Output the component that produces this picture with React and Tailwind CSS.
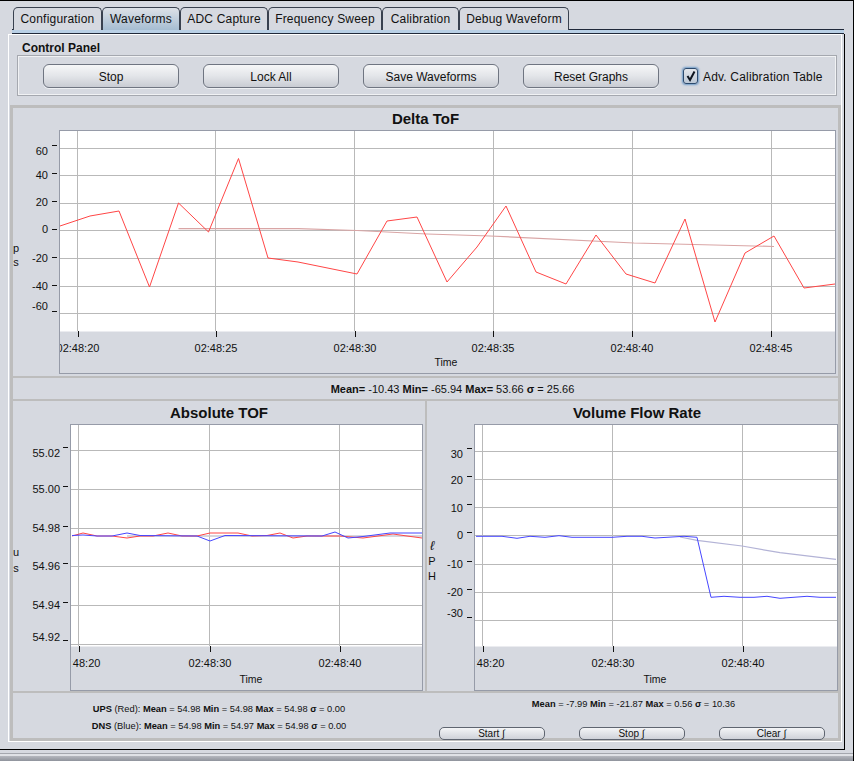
import React from 'react';

const TABS = ['Configuration', 'Waveforms', 'ADC Capture', 'Frequency Sweep', 'Calibration', 'Debug Waveform'];
const TAB_WIDTHS = { Configuration: 'w-[89px]', Waveforms: 'w-[78px]', 'ADC Capture': 'w-[88px]', 'Frequency Sweep': 'w-[114px]', Calibration: 'w-[77px]', 'Debug Waveform': 'w-[110px]' };

const DELTA = '60,226 90,216 119,211 149.5,287 178.5,203 208.5,232 238.5,158.5 268,258 298,262 357,274 387,221 417,217 447,282 477,247 506,206 536,272 566,284 596,235 626,274 655,283 685,219 715,322 745,253 774,236 804,288 835,284';
const DELTA_AVG = '178.5,228.7 298,228.7 357,230.5 427,234 490,236 634,243 774,246.5';
const UPS = '72,536 83,533 97,536 112,536 127,538 140,536 153,536 168,533 182,536 197,536 210,533 238,533 252,536 267,535.5 280,533 293,538 307,536 340,536 363,538 393,534 407,536 422,538';
const DNS = '72,535.5 83,535 97,536 112,536 127,533 140,535.5 197,536 210,541 225,535.5 322,536 335,532 348,538 363,536.5 390,533 422,533';
const TOF_AVG = '127,536 422,536';
const FLOW = '476,536.3 502,536.3 517,538.3 530,536.3 545,537.3 559,535.7 572,537.3 612,537.3 627,536.3 642,536.3 655,538 684,536.3 697,537.3 711,597.3 724,596.3 740,597.3 754,597.3 767,596.3 780,598.3 807,596.3 820,597.3 836,597.3';
const FLOW_AVG = '680,537 697,540.3 742,546 780,552.7 836,559.3';

function Plot({ box, frame, bottom, clipLeft, xs, ys, xTicks, xLabels, timeX, yTicks, yLabels, yRight, unit, id, children }) {
  const [vx, vy, vw, vh] = box;
  const [fx, fy, fr, fb] = frame;
  return (
    <svg width={vw} height={vh} viewBox={`${vx} ${vy} ${vw} ${vh}`} className="block shrink-0">
      <defs>
        <clipPath id={id}>
          <rect x={fx + clipLeft} y={fy} width={fr - fx} height={fb - fy} />
        </clipPath>
      </defs>
      <rect x={fx + 0.5} y={fy + 0.5} width={fr - fx} height={bottom - fy} fill="#fff" />
      <g stroke="#b9b9b9" shapeRendering="crispEdges">
        {xs.map((x) => <line key={x} x1={x + 0.5} x2={x + 0.5} y1={fy} y2={bottom} />)}
        {ys.map((y) => <line key={y} x1={fx} x2={fr} y1={y + 0.5} y2={y + 0.5} />)}
      </g>
      <g clipPath={`url(#${id})`}>
        {children}
        {xLabels.map((l, i) => (
          <text key={l} x={xTicks[i]} y={bottom + 21} fontSize="11" textAnchor="middle" fill="#111">{l}</text>
        ))}
      </g>
      <g stroke="#111" shapeRendering="crispEdges">
        {xTicks.map((x) => <line key={x} x1={x + 0.5} x2={x + 0.5} y1={bottom} y2={bottom + 6} />)}
        {yTicks.map((t) => <line key={t[0]} x1={fx - 7} x2={fx - 2} y1={t[0] + 0.5} y2={t[0] + 0.5} />)}
      </g>
      {yTicks.map((t, i) => (
        <text key={yLabels[i]} x={yRight} y={t[1]} fontSize="11" textAnchor="end" fill="#111">{yLabels[i]}</text>
      ))}
      {unit.map((u) => (
        <text key={u[0]} x={u[1]} y={u[2]} fontSize={u[0] === 'ℓ' ? 13 : 11} fontStyle={u[0] === 'ℓ' ? 'italic' : 'normal'} textAnchor="middle" fill="#111">{u[0]}</text>
      ))}
      <text x={timeX} y={fb - 7} fontSize="10.5" textAnchor="middle" fill="#111">Time</text>
      <rect x={fx + 0.5} y={fy + 0.5} width={fr - fx} height={fb - fy} fill="none" stroke="#969ba8" shapeRendering="crispEdges" />
    </svg>
  );
}

function PanelButton({ label }) {
  return (
    <button className="w-[136px] h-[24px] pt-[1px] rounded-[6px] border border-[#6f7581] bg-gradient-to-b from-[#f6f7f8] via-[#e3e5e9] to-[#c9ccd3] text-[12px] text-[#111] shadow-[0_1px_0_#eef0f3]">
      {label}
    </button>
  );
}

function SmallButton({ label }) {
  return (
    <button className="w-[106px] h-[13px] rounded-[5px] border border-[#5f6570] bg-gradient-to-b from-[#f4f5f7] to-[#cfd2d9] text-[10px] leading-[10px] text-[#111]">
      {label}
    </button>
  );
}

export default function App() {
  return (
    <div className="relative w-[854px] h-[761px] overflow-hidden bg-[#d6d9e0] border-t border-r border-black text-[#111] font-['Liberation_Sans',Arial,sans-serif]">
      <div className="w-[845px]">
        <div className="flex pl-[13px] pt-[6px]">
          {TABS.map((t) => (
            <div
              key={t}
              className={`${TAB_WIDTHS[t]} h-[23px] relative flex items-center justify-center rounded-t-[5px] border border-b-0 border-[#39414f] text-[12px] tracking-[0.2px] ${t === 'Waveforms' ? 'z-10 bg-gradient-to-b from-[#dde1e7] to-[#a6bdd2]' : 'bg-[#d6d9e0]'}`}
            >
              {t}
            </div>
          ))}
        </div>
        <div className="-mt-[1px] ml-[12px] w-[832px] h-[5px] border-y border-[#20293a] bg-[#b9d0e6]" />

        <div className="h-[716px] border-r border-b border-black">
          <div className="ml-[8px] w-[834px] h-[708px] border border-white">
            <div className="h-[70px]">
              <div className="pl-[13px] pt-[6px] text-[12px] leading-[14px] font-bold">Control Panel</div>
              <div className="ml-[8px] w-[820px] h-[41px] border border-[#a5a8af] shadow-[inset_0_0_0_1px_#f1f2f4] flex items-start pl-[25px] pt-[8px] gap-[24px]">
                <PanelButton label="Stop" />
                <PanelButton label="Lock All" />
                <PanelButton label="Save Waveforms" />
                <PanelButton label="Reset Graphs" />
                <div className="flex items-center h-[24px] gap-[5px] text-[12px] tracking-[0.18px]">
                  <div className="w-[15px] h-[16px] rounded-[3px] border border-[#2c4a6e] bg-gradient-to-b from-[#e4e7ec] to-[#bcc8d6] shadow-[0_0_2px_1px_#6f9bc8] flex items-center justify-center">
                    <svg width="12" height="12" viewBox="0 0 12 12">
                      <path d="M2.5 6 L5 10 L9.5 1.5" fill="none" stroke="#0d1420" strokeWidth="2" />
                    </svg>
                  </div>
                  <span className="pt-[1px]">Adv. Calibration Table</span>
                </div>
              </div>
            </div>

            <div className="ml-[1px] w-[831px] h-[636px] border-[3px] border-[#bdbdbd] flex flex-col">
              <div className="h-[22px] shrink-0 flex items-center justify-center text-[15px] leading-[20px] font-bold">Delta ToF</div>
              <Plot
                id="delta"
                box={[13, 130, 825, 246]}
                frame={[59, 130, 835, 373]}
                bottom={331}
                clipLeft={1}
                xs={[77, 215, 354, 493, 632, 771]}
                ys={[148, 175, 203, 230, 258, 286, 313]}
                xTicks={[78, 216, 355, 493, 632, 771]}
                xLabels={['02:48:20', '02:48:25', '02:48:30', '02:48:35', '02:48:40', '02:48:45']}
                timeX={446}
                yTicks={[[145, 155], [173, 179], [201, 206], [229, 233], [257, 262], [285, 290], [311, 310]]}
                yLabels={['60', '40', '20', '0', '-20', '-40', '-60']}
                yRight={48}
                unit={[['p', 16, 252], ['s', 16, 266]]}
              >
                <polyline points={DELTA_AVG} fill="none" stroke="#d9a5a5" strokeWidth="1.2" />
                <polyline points={DELTA} fill="none" stroke="#ff4646" strokeWidth="1" />
              </Plot>
              <div className="h-[2px] shrink-0 bg-[#bdbdbd]" />
              <div className="h-[21px] shrink-0 flex items-center justify-center pt-[2px] pl-[54px] text-[11px]">
                <b>Mean=</b>&nbsp;-10.43&nbsp;<b>Min=</b>&nbsp;-65.94&nbsp;<b>Max=</b>&nbsp;53.66&nbsp;<b>σ</b>&nbsp;=&nbsp;25.66
              </div>
              <div className="h-[2px] shrink-0 bg-[#bdbdbd]" />

              <div className="flex h-[290px] shrink-0">
                <div className="w-[412px]">
                  <div className="h-[23px] flex items-center justify-center text-[15px] leading-[20px] font-bold">Absolute TOF</div>
                  <Plot
                    id="tof"
                    box={[13, 424, 412, 267]}
                    frame={[70, 424, 422, 690]}
                    bottom={646}
                    clipLeft={2}
                    xs={[78, 209, 339]}
                    ys={[450, 489, 528, 566, 605, 644]}
                    xTicks={[79, 210, 340]}
                    xLabels={['02:48:20', '02:48:30', '02:48:40']}
                    timeX={251}
                    yTicks={[[447, 457], [486, 493], [526, 532], [563, 570], [602, 609], [640, 641]]}
                    yLabels={['55.02', '55.00', '54.98', '54.96', '54.94', '54.92']}
                    yRight={60}
                    unit={[['u', 16, 556], ['s', 16, 572]]}
                  >
                    <polyline points={TOF_AVG} fill="none" stroke="#c9c9d2" strokeWidth="1.5" />
                    <polyline points={UPS} fill="none" stroke="#ff4646" strokeWidth="1" />
                    <polyline points={DNS} fill="none" stroke="#4646ff" strokeWidth="1" />
                  </Plot>
                </div>
                <div className="w-[2px] bg-[#bdbdbd]" />
                <div className="w-[411px]">
                  <div className="h-[23px] flex items-center justify-center pl-[9px] text-[15px] leading-[20px] font-bold">Volume Flow Rate</div>
                  <Plot
                    id="flow"
                    box={[427, 424, 411, 267]}
                    frame={[474, 424, 837, 690]}
                    bottom={646}
                    clipLeft={2}
                    xs={[482, 612, 742]}
                    ys={[451, 479, 507, 535, 564, 592, 620]}
                    xTicks={[483, 613, 743]}
                    xLabels={['02:48:20', '02:48:30', '02:48:40']}
                    timeX={655}
                    yTicks={[[448, 458], [476, 484], [504, 512], [532, 539], [561, 568], [589, 596], [617, 617]]}
                    yLabels={['30', '20', '10', '0', '-10', '-20', '-30']}
                    yRight={463}
                    unit={[['ℓ', 432, 550], ['P', 432, 565], ['H', 432, 580]]}
                  >
                    <polyline points={FLOW_AVG} fill="none" stroke="#b3b3d6" strokeWidth="1.2" />
                    <polyline points={FLOW} fill="none" stroke="#4646ff" strokeWidth="1" />
                  </Plot>
                </div>
              </div>
              <div className="h-[2px] shrink-0 bg-[#bdbdbd]" />

              <div className="flex flex-1 min-h-0">
                <div className="w-[412px] flex flex-col items-center pt-[10px] gap-[5px] text-[9.3px] leading-[12px]">
                  <div><b>UPS</b> (Red): <b>Mean</b> = 54.98 <b>Min</b> = 54.98 <b>Max</b> = 54.98 <b>σ</b> = 0.00</div>
                  <div><b>DNS</b> (Blue): <b>Mean</b> = 54.98 <b>Min</b> = 54.97 <b>Max</b> = 54.98 <b>σ</b> = 0.00</div>
                </div>
                <div className="flex-1 flex flex-col items-center">
                  <div className="pt-[5px] pl-[4px] text-[9.3px] leading-[12px]"><b>Mean</b> = -7.99 <b>Min</b> = -21.87 <b>Max</b> = 0.56 <b>σ</b> = 10.36</div>
                  <div className="flex gap-[34px] mt-[17px]">
                    <SmallButton label="Start ∫" />
                    <SmallButton label="Stop ∫" />
                    <SmallButton label="Clear ∫" />
                  </div>
                </div>
              </div>
            </div>
          </div>
        </div>
      </div>
      <div className="h-[3px]" />
      <div className="h-[1px] bg-[#a4a7ae]" />
      <div className="h-[2px] bg-[#dfe1e6]" />
      <div className="h-[5px] bg-gradient-to-b from-[#b4b7be] to-[#8f939c]" />
    </div>
  );
}
